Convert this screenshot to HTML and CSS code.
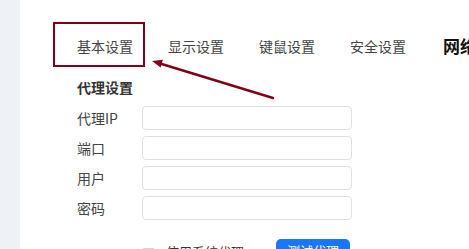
FILE: index.html
```html
<!DOCTYPE html>
<html lang="zh-CN">
<head>
<meta charset="utf-8">
<title>设置</title>
<link rel="stylesheet" href="styles.css">
</head>
<body>
<div class="app">
  <aside class="sidebar"></aside>
  <main class="main">
    <nav class="tabs">
      <span class="tab">基本设置</span>
      <span class="tab">显示设置</span>
      <span class="tab">键鼠设置</span>
      <span class="tab">安全设置</span>
      <span class="tab active">网络设置</span>
    </nav>
    <h3 class="section-title">代理设置</h3>
    <div class="form">
      <div class="row"><span class="label">代理IP</span><input class="input" type="text"></div>
      <div class="row"><span class="label">端口</span><input class="input" type="text"></div>
      <div class="row"><span class="label">用户</span><input class="input" type="text"></div>
      <div class="row"><span class="label">密码</span><input class="input" type="password"></div>
    </div>
    <div class="actions">
      <div class="check-group"><span class="checkbox"></span><span class="check-text">使用系统代理</span></div>
      <button class="btn">测试代理</button>
    </div>
    <div class="highlight"></div>
  </main>
  <svg class="annotation" width="469" height="249" viewBox="0 0 469 249">
    <line x1="273" y1="98" x2="160" y2="63.5" stroke="#80001a" stroke-width="2.4" stroke-linecap="round"/>
    <polygon points="152,61 162.9,59.8 160.6,67.6" fill="#80001a"/>
  </svg>
</div>
</body>
</html>
```

FILE: styles.css
```css
html, body {
  margin: 0;
  padding: 0;
  background: #ffffff;
  font-family: "Noto Sans CJK SC", "Noto Sans", sans-serif;
  color: #444;
}
.app {
  position: relative;
  display: flex;
  width: 469px;
  height: 249px;
  overflow: hidden;
}
.sidebar {
  width: 20px;
  flex: none;
  background: #eef1f6;
}
.main {
  position: relative;
  flex: 1;
  padding-left: 57px;
}
.tabs {
  display: flex;
  align-items: center;
  gap: 35px;
  padding-top: 36px;
  height: 20px;
  white-space: nowrap;
}
.tab {
  font-size: 14px;
  line-height: 20px;
  color: #444;
}
.tab.active {
  font-size: 17px;
  font-weight: bold;
  color: #111;
  margin-left: 2px;
}
.section-title {
  margin: 21px 0 0;
  font-size: 14px;
  line-height: 20px;
  font-weight: bold;
  color: #333;
}
.form {
  display: flex;
  flex-direction: column;
  gap: 6px;
  margin-top: 9px;
}
.row {
  display: flex;
  align-items: center;
  height: 24px;
}
.label {
  width: 65px;
  flex: none;
  font-size: 14px;
  color: #444;
}
.input {
  width: 210px;
  height: 24px;
  box-sizing: border-box;
  border: 1px solid #dcdfe6;
  border-radius: 4px;
  padding: 0 6px;
  margin: 0;
  outline: none;
}
.actions {
  display: flex;
  align-items: center;
  height: 30px;
  margin-top: 19px;
  padding-left: 65px;
}
.check-group {
  display: flex;
  align-items: center;
  width: 134px;
}
.checkbox {
  width: 13px;
  height: 13px;
  box-sizing: border-box;
  border: 1px solid #cfd3da;
  border-radius: 2px;
  background: #fff;
}
.check-text {
  margin-left: 11px;
  margin-bottom: 5px;
  font-size: 13px;
  line-height: 16px;
  color: #333;
}
.btn {
  width: 74px;
  height: 30px;
  border: none;
  border-radius: 5px;
  background: #1677ff;
  color: #fff;
  font-family: inherit;
  font-size: 13px;
  line-height: 16px;
  padding: 0 0 6px;
}
.highlight {
  position: absolute;
  left: 33px;
  top: 22px;
  width: 92px;
  height: 45px;
  box-sizing: border-box;
  border: 2px solid #80001a;
}
.annotation {
  position: absolute;
  left: 0;
  top: 0;
  pointer-events: none;
}
```
